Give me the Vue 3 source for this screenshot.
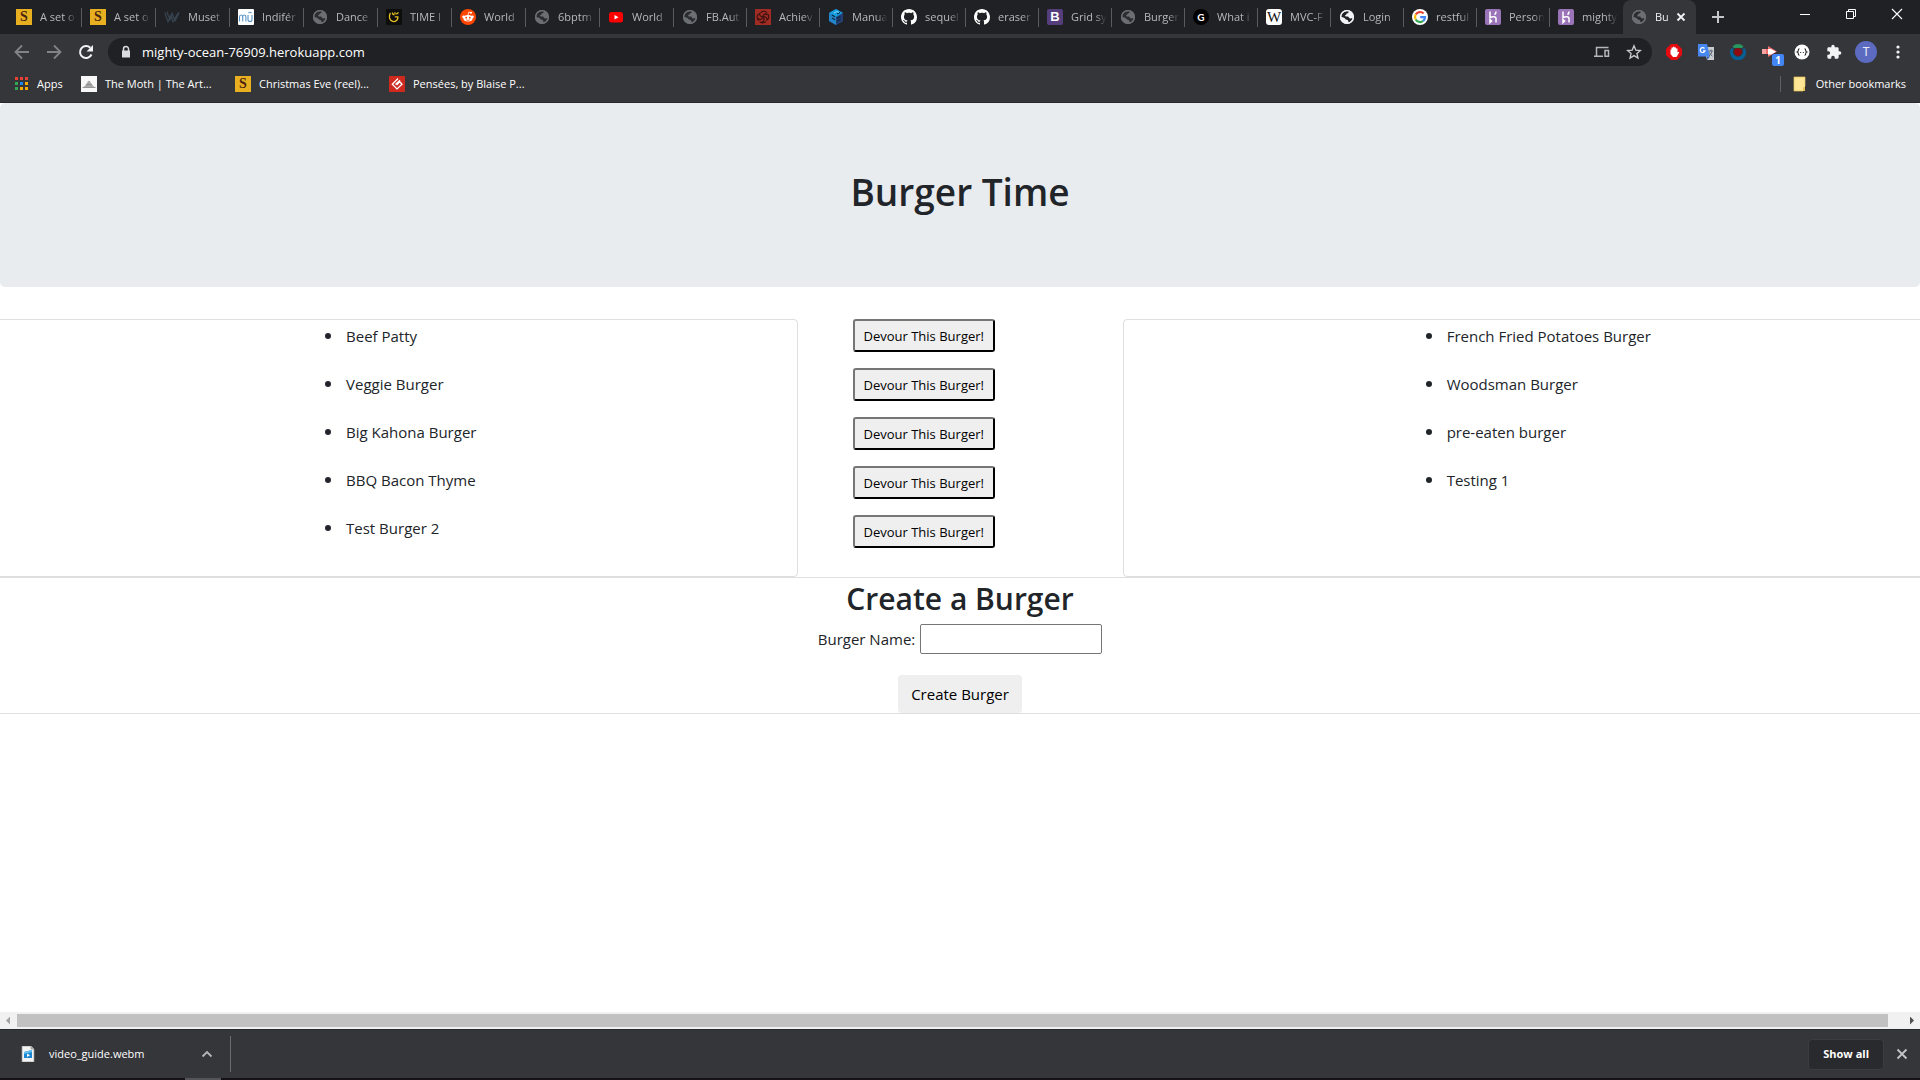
<script setup>
import { ref } from 'vue'

const letters = { session: 'S', bootstrap: 'B', gdark: 'G', wiki: 'W' }

const tabs = [
  { icon: 'session', title: 'A set o' },
  { icon: 'session', title: 'A set o' },
  { icon: 'muse', title: 'Muset' },
  { icon: 'mu', title: 'Indifér' },
  { icon: 'globe', title: 'Dance' },
  { icon: 'genius', title: 'TIME I' },
  { icon: 'reddit', title: 'World' },
  { icon: 'globe', title: '6bptm' },
  { icon: 'youtube', title: 'World' },
  { icon: 'globe', title: 'FB.Aut' },
  { icon: 'knot', title: 'Achiev' },
  { icon: 'sequelize', title: 'Manua' },
  { icon: 'github', title: 'sequel' },
  { icon: 'github', title: 'eraser' },
  { icon: 'bootstrap', title: 'Grid sy' },
  { icon: 'globe', title: 'Burger' },
  { icon: 'gdark', title: 'What i' },
  { icon: 'wiki', title: 'MVC-F' },
  { icon: 'globe-light', title: 'Login' },
  { icon: 'google', title: 'restful' },
  { icon: 'heroku', title: 'Person' },
  { icon: 'heroku', title: 'mighty' },
  { icon: 'globe', title: 'Bu', active: true },
]

const bookmarks = [
  { icon: 'moth', title: 'The Moth | The Art...' },
  { icon: 'session', title: 'Christmas Eve (reel)...' },
  { icon: 'goodreads', title: 'Pensées, by Blaise P...' },
]

const extensions = [
  { icon: 'hand', label: 'Ad blocker' },
  { icon: 'translate', label: 'Translate' },
  { icon: 'orb', label: 'Privacy' },
  { icon: 'arrow', label: 'Redirects', badge: '1' },
  { icon: 'braces', label: 'JSON viewer' },
  { icon: 'puzzle', label: 'Extensions' },
]

const fresh = ['Beef Patty', 'Veggie Burger', 'Big Kahona Burger', 'BBQ Bacon Thyme', 'Test Burger 2']
const devoured = ['French Fried Potatoes Burger', 'Woodsman Burger', 'pre-eaten burger', 'Testing 1']
const burgerName = ref('')
</script>

<template>
  <div class="window">
    <svg class="sprite" aria-hidden="true">
      <symbol id="i-muse" viewBox="0 0 16 16">
        <path d="M1 4l3 9 3-7 2 7 5-9M3 3l3 8 2-7 3 8 4-8" fill="none" stroke="#36424e" stroke-width="1.3" stroke-linejoin="round" stroke-linecap="round" />
      </symbol>
      <symbol id="i-mu" viewBox="0 0 16 16">
        <rect width="16" height="16" rx="1" fill="#fff" />
        <path d="M1.500 12.500V8q0-2 1.600-2t1.600 2V12.500M4.700 8q0-2 1.600-2t1.600 2V12.500M10 6V10.500q0 2 2 2t2-2V6M10.500 4q1.500-1.500 3 0" fill="none" stroke="#5a95c8" stroke-width="1.100" />
      </symbol>
      <symbol id="i-globe" viewBox="0 0 16 16">
        <circle cx="8" cy="8" r="7" fill="#6b6f74" />
        <path d="M7 2.200L9.800 2c.3 1.500-.8 2.300-2 2.500-.6 1-.9 1.700-2 1.900.1 1.100 1.500.9 3.200 1.100.9.700 1 1.700 2 1.900 1.100.1 1.600-.4 2.700-.5-.5 2.300-2 4-4.200 4.500-.2-1-.1-1.900-.9-2.400-1.200-.2-2.100-.4-2.500-1.500C5.400 8.700 3.700 8.300 2.300 8 2.100 5 4 2.900 7 2.200z" fill="#2b2c30" />
        <circle cx="8" cy="8" r="6.400" fill="none" stroke="#6b6f74" stroke-width="1.300" />
      </symbol>
      <symbol id="i-globe-light" viewBox="0 0 16 16">
        <circle cx="8" cy="8" r="7" fill="#f1f3f4" />
        <path d="M7 2.200L9.800 2c.3 1.500-.8 2.300-2 2.500-.6 1-.9 1.700-2 1.900.1 1.100 1.500.9 3.200 1.100.9.700 1 1.700 2 1.900 1.100.1 1.600-.4 2.700-.5-.5 2.300-2 4-4.200 4.500-.2-1-.1-1.900-.9-2.400-1.200-.2-2.100-.4-2.500-1.500C5.400 8.700 3.700 8.300 2.300 8 2.100 5 4 2.900 7 2.200z" fill="#202124" />
        <circle cx="8" cy="8" r="6.400" fill="none" stroke="#f1f3f4" stroke-width="1.300" />
      </symbol>
      <symbol id="i-genius" viewBox="0 0 16 16">
        <rect width="16" height="16" rx="1" fill="#0d0d0c" />
        <path d="M4.500 4C3 6 3 9.500 4.800 11.300c1.800 1.800 4.700 1.600 6.200-.3.900-1.200 1-2.300.9-3.200H8.800M6.500 3.500c0 1.500.7 2.300 1.800 2.300M9 3.300v2.200M10.300 5.300L12.500 3.500" fill="none" stroke="#e8c020" stroke-width="1.300" />
      </symbol>
      <symbol id="i-reddit" viewBox="0 0 16 16">
        <circle cx="8" cy="8" r="8" fill="#ff4500" />
        <ellipse cx="8" cy="9.300" rx="4.600" ry="3.300" fill="#fff" />
        <circle cx="3.500" cy="7.800" r="1.300" fill="#fff" /><circle cx="12.500" cy="7.800" r="1.300" fill="#fff" />
        <circle cx="11" cy="3.800" r="1" fill="#fff" />
        <path d="M8 6.200l.7-3 2.200.5" fill="none" stroke="#fff" stroke-width=".8" />
        <circle cx="6.200" cy="8.700" r=".9" fill="#ff4500" /><circle cx="9.800" cy="8.700" r=".9" fill="#ff4500" />
        <path d="M6 10.800q2 1.300 4 0" fill="none" stroke="#ff4500" stroke-width=".7" />
      </symbol>
      <symbol id="i-youtube" viewBox="0 0 16 16">
        <rect x="1" y="3" width="14" height="10.500" rx="2.500" fill="#f00" />
        <path d="M6.500 6v4.500l4-2.250z" fill="#fff" />
      </symbol>
      <symbol id="i-knot" viewBox="0 0 16 16">
        <rect width="16" height="16" fill="#a02c24" />
        <path d="M8 8c0-3 3-4 4-2M8 8c3-1 5 1.500 3.500 3.500M8 8c2 2 1 5-1.500 5M8 8c-1 3-4 3.500-5 1M8 8C5 8 3.500 5 5.500 3.500M6 3.500c2-2 5-1.500 6 .5M12.500 5c2 2 1.500 5-.5 6M11 12.500c-2 1.800-5 1.800-6.500 0M3.500 11.500C1.500 9.500 2 6.500 3.500 5" fill="none" stroke="#3b1110" stroke-width="1.100" />
      </symbol>
      <symbol id="i-sequelize" viewBox="0 0 16 16">
        <path d="M8 0l7 4v8l-7 4-7-4V4z" fill="#1c5fa8" />
        <path d="M8 0l7 4-7 4-7-4z" fill="#16a0e0" /><path d="M1 4l7 4v8l-7-4z" fill="#2384c8" /><path d="M8 8l7-4v8l-7 4z" fill="#243f74" />
        <path d="M4 6l3 1.700M4 9l3 1.700M9 5l3-1.500M9 9.500l3.500-2M9 12.500l3.500-2" stroke="#0b2945" stroke-width="1.200" />
        <path d="M6 4l3-1.500 2 1.200" fill="none" stroke="#7bd4f5" />
      </symbol>
      <symbol id="i-github" viewBox="0 0 16 16">
        <path fill="#fff" d="M8 0C3.580 0 0 3.580 0 8c0 3.540 2.290 6.530 5.470 7.590.4.070.55-.17.55-.38 0-.19-.01-.82-.01-1.490-2.010.37-2.530-.49-2.690-.94-.09-.23-.48-.94-.82-1.130-.28-.15-.68-.52-.01-.53.63-.01 1.080.58 1.230.82.72 1.210 1.870.87 2.330.66.07-.52.28-.87.51-1.070-1.780-.2-3.640-.89-3.640-3.950 0-.87.31-1.590.82-2.150-.08-.2-.36-1.020.08-2.120 0 0 .67-.21 2.200.82.64-.18 1.320-.27 2-.27s1.360.09 2 .27c1.530-1.040 2.200-.82 2.200-.82.44 1.100.16 1.920.08 2.120.51.56.82 1.270.82 2.150 0 3.070-1.870 3.750-3.650 3.950.29.25.54.73.54 1.480 0 1.070-.01 1.930-.01 2.200 0 .21.15.46.55.38A8.010 8.010 0 0 0 16 8c0-4.420-3.580-8-8-8z" />
      </symbol>
      <symbol id="i-google" viewBox="0 0 16 16">
        <circle cx="8" cy="8" r="8" fill="#fff" />
        <g fill="none" stroke-width="2.200">
          <path d="M11.600 4.500A5 5 0 0 0 3.700 5.500" stroke="#ea4335" /><path d="M3.700 5.500a5 5 0 0 0 0 5" stroke="#fbbc05" />
          <path d="M3.700 10.500a5 5 0 0 0 7.500 1.400" stroke="#34a853" /><path d="M11.200 11.900A5 5 0 0 0 13 8.200H8.200" stroke="#4285f4" />
        </g>
      </symbol>
      <symbol id="i-heroku" viewBox="0 0 16 16">
        <rect width="16" height="16" rx="2" fill="#9a73b8" />
        <path d="M5 2.500v6c2-1 6-1.500 6 .8v4.200M5 10.500v3l1.600-1.500zM11 2.500q0 2-1.500 3.200" fill="none" stroke="#fff" stroke-width="1.500" />
      </symbol>
      <symbol id="i-moth" viewBox="0 0 16 16">
        <rect width="16" height="16" fill="#f8f8f8" /><path d="M1.500 11.500q3-1.500 4.500-4.500Q8 2.500 10 7q1.500 3 4.500 4.500z" fill="#a8a8a8" /><path d="M1.500 11.500h13M5 8.500h6" stroke="#888" stroke-width=".8" />
      </symbol>
      <symbol id="i-goodreads" viewBox="0 0 16 16">
        <rect width="16" height="16" rx="1" fill="#cf2a20" />
        <path d="M9 2.500L3.300 8.200l4.700 4.700 5-4.700-2.200-2.400L7.600 9M6.500 8.500l4.500-4.200" fill="none" stroke="#fff" stroke-width="1.300" />
      </symbol>
      <symbol id="i-apps" viewBox="0 0 14 14">
        <path d="M0 0h3v3H0zM5 0h3v3H5zM10 0h3v3h-3z" fill="#ea4335" />
        <path d="M0 5h3v3H0zM0 10h3v3H0z" fill="#34a853" /><path d="M5 5h3v3H5z" fill="#1a86f0" />
        <path d="M10 5h3v3h-3zM5 10h3v3H5zM10 10h3v3h-3z" fill="#fbab05" />
      </symbol>
      <symbol id="i-folder" viewBox="0 0 16 16">
        <path d="M2 1h11v14H2z" fill="#ffe694" /><path d="M2 1h11v9M2 1v14h9" fill="none" stroke="#e5c35c" stroke-width=".7" /><path d="M11 11h2v4h-2z" fill="#e8c252" />
      </symbol>
      <symbol id="i-back" viewBox="0 0 16 16"><path d="M15 8H2M8 1.500L1.500 8 8 14.500" fill="none" stroke="#808387" stroke-width="1.800" /></symbol>
      <symbol id="i-forward" viewBox="0 0 16 16"><path d="M1 8h13M8 1.500L14.500 8 8 14.500" fill="none" stroke="#808387" stroke-width="1.800" /></symbol>
      <symbol id="i-reload" viewBox="0 0 16 16"><path d="M13.500 10.500a6 6 0 1 1-1.200-6.700" fill="none" stroke="#f1f3f4" stroke-width="2" /><path d="M15 1v6.500H8.500z" fill="#f1f3f4" /></symbol>
      <symbol id="i-lock" viewBox="0 0 16 16"><path d="M4 6.500h8v7H4z" fill="#dadce0" /><path d="M5.500 7V5a2.500 2.500 0 0 1 5 0v2" fill="none" stroke="#dadce0" stroke-width="1.500" /></symbol>
      <symbol id="i-devices" viewBox="0 0 16 16"><path d="M14.500 3.500H2.500V12M0 12.200h9" fill="none" stroke="#b4b7bb" stroke-width="1.500" /><path d="M11 6.500h3.500v5.800H11z" fill="none" stroke="#b4b7bb" stroke-width="1.500" /></symbol>
      <symbol id="i-star" viewBox="0 0 16 16"><path d="M8 1.800l1.800 4.300 4.700.4-3.600 3 1.100 4.600-4-2.500-4 2.500 1.100-4.600-3.600-3 4.700-.4z" fill="none" stroke="#c8cacd" stroke-width="1.300" /></symbol>
      <symbol id="i-hand" viewBox="0 0 16 16"><path d="M5 0h6l5 5v6l-5 5H5l-5-5V5z" fill="#e50b10" /><path d="M4.500 8V5.500h1V3.500h1.500V2.700h1.500v.8H10v1h1.500v4l1-.8.700.8-2.700 4.500H7L4.500 10z" fill="#fff" /></symbol>
      <symbol id="i-translate" viewBox="0 0 16 16">
        <path d="M6 3h10v13H9z" fill="#c9ccd1" /><path d="M0 0h9l3 12.500H0z" fill="#4687f1" /><path d="M9 16v-3.500h3z" fill="#2f62bf" />
        <path d="M6.500 4.500A2.400 2.400 0 1 0 7 6.800H5" fill="none" stroke="#fff" stroke-width="1.200" />
        <path d="M10.500 7H15M13 5.500V7M14 7q-.5 3-3 5M11.500 8.500q1 2.500 3 3.700" fill="none" stroke="#5c6673" />
      </symbol>
      <symbol id="i-orb" viewBox="0 0 16 16"><path d="M2.500 2.500a7.500 7.500 0 0 1 11 0L12 4H4z" fill="#27965f" /><path d="M1 4.500a8 8 0 1 0 14 0h-3a5 5 0 1 1-8 0z" fill="#066096" /><circle cx="8" cy="8" r="3.700" fill="#920a0d" /></symbol>
      <symbol id="i-arrow" viewBox="0 0 16 16"><path d="M0 5h6V2l9 5.500L6 13v-3H0z" fill="#f26d6d" /><path d="M6 5h3l5 2.700-5 2.800H6z" fill="#fff" /><path d="M0 5h4v5H0z" fill="#f5a3a3" /></symbol>
      <symbol id="i-braces" viewBox="0 0 16 16"><circle cx="8" cy="8" r="7.500" fill="#fff" /><path d="M5.500 4.700q-1.200 0-1.200 1.500T3.300 8q1 .3 1 1.800t1.200 1.500M10.500 4.700q1.200 0 1.200 1.500T12.700 8q-1 .3-1 1.800t-1.200 1.500M6.200 8.500h1M8.800 8.500h1" fill="none" stroke="#222" stroke-width="1.100" /></symbol>
      <symbol id="i-puzzle" viewBox="0 0 24 24"><path fill="#f1f3f4" d="M20.500 11H19V7c0-1.100-.9-2-2-2h-4V3.500a2.500 2.500 0 0 0-5 0V5H4c-1.100 0-2 .9-2 2v3.800h1.500a2.700 2.700 0 0 1 0 5.400H2V20c0 1.100.9 2 2 2h3.800v-1.500a2.700 2.700 0 0 1 5.400 0V22H17c1.100 0 2-.9 2-2v-4h1.500a2.500 2.500 0 0 0 0-5z" /></symbol>
      <symbol id="i-dots" viewBox="0 0 16 16"><circle cx="8" cy="3" r="1.600" fill="#f1f3f4" /><circle cx="8" cy="8" r="1.600" fill="#f1f3f4" /><circle cx="8" cy="13" r="1.600" fill="#f1f3f4" /></symbol>
      <symbol id="i-plus" viewBox="0 0 16 16"><path d="M8 2v12M2 8h12" stroke="#c4c7ca" stroke-width="2" /></symbol>
      <symbol id="i-x" viewBox="0 0 16 16"><path d="M4.500 4.500l7 7M11.500 4.500l-7 7" stroke="#f1f3f4" stroke-width="1.800" /></symbol>
      <symbol id="i-minimize" viewBox="0 0 16 16"><path d="M3 8.500h10" stroke="#fff" /></symbol>
      <symbol id="i-restore" viewBox="0 0 16 16"><path d="M3.500 5.500h7v7h-7zM5.500 5.500v-2h7v7h-2" fill="none" stroke="#fff" /></symbol>
      <symbol id="i-close" viewBox="0 0 16 16"><path d="M3 3l10 10M13 3L3 13" stroke="#fff" stroke-width="1.100" /></symbol>
      <symbol id="i-file" viewBox="0 0 16 16"><path d="M2 0h9l3 3v13H2z" fill="#f3f3f3" stroke="#999" stroke-width=".7" /><path d="M11 0v3h3" fill="#bbb" stroke="#888" stroke-width=".6" /><path d="M4 6l8-2v8H4z" fill="#1b86d2" /><path d="M4 6l8-2v2L4 8z" fill="#63c0ee" /><path d="M7 7.500v3.500l3-1.700z" fill="#fff" /></symbol>
      <symbol id="i-chevron" viewBox="0 0 16 16"><path d="M3.500 10.500L8 6l4.500 4.500" fill="none" stroke="#b4b6b9" stroke-width="1.800" /></symbol>
      <symbol id="i-dismiss" viewBox="0 0 16 16"><path d="M3.500 3.500l9 9M12.500 3.500l-9 9" stroke="#c3c4c6" stroke-width="1.800" /></symbol>
    </svg>

    <header class="chrome">
      <div class="tabstrip">
        <div v-for="(tab, i) in tabs" :key="i" class="tab" :class="{ active: tab.active }">
          <span v-if="letters[tab.icon]" class="icon letter" :class="tab.icon">{{ letters[tab.icon] }}</span>
          <svg v-else class="icon"><use :href="'#i-' + tab.icon" /></svg>
          <span class="tab-title">{{ tab.title }}</span>
          <button v-if="tab.active" class="bare tab-close" aria-label="Close tab"><svg class="icon"><use href="#i-x" /></svg></button>
        </div>
        <button class="bare new-tab" aria-label="New tab"><svg class="icon"><use href="#i-plus" /></svg></button>
        <div class="window-controls">
          <button class="bare" aria-label="Minimize"><svg class="icon"><use href="#i-minimize" /></svg></button>
          <button class="bare" aria-label="Restore"><svg class="icon"><use href="#i-restore" /></svg></button>
          <button class="bare" aria-label="Close"><svg class="icon"><use href="#i-close" /></svg></button>
        </div>
      </div>

      <div class="toolbar">
        <button class="bare cell" aria-label="Back"><svg class="icon"><use href="#i-back" /></svg></button>
        <button class="bare cell" aria-label="Forward"><svg class="icon"><use href="#i-forward" /></svg></button>
        <button class="bare cell" aria-label="Reload"><svg class="icon"><use href="#i-reload" /></svg></button>
        <div class="omnibox">
          <svg class="icon"><use href="#i-lock" /></svg>
          <input class="url" type="text" aria-label="Address" value="mighty-ocean-76909.herokuapp.com" />
          <button class="bare cell" aria-label="Send to device"><svg class="icon"><use href="#i-devices" /></svg></button>
          <button class="bare cell" aria-label="Bookmark"><svg class="icon"><use href="#i-star" /></svg></button>
        </div>
        <button v-for="ext in extensions" :key="ext.icon" class="bare cell" :aria-label="ext.label">
          <svg class="icon"><use :href="'#i-' + ext.icon" /></svg>
          <span v-if="ext.badge" class="badge">{{ ext.badge }}</span>
        </button>
        <button class="bare cell" aria-label="Profile"><span class="avatar">T</span></button>
        <button class="bare cell" aria-label="Menu"><svg class="icon"><use href="#i-dots" /></svg></button>
      </div>

      <nav class="bookmarks">
        <a class="bookmark apps" href="#"><svg class="apps-icon"><use href="#i-apps" /></svg>Apps</a>
        <a v-for="b in bookmarks" :key="b.title" class="bookmark saved" href="#">
          <span v-if="letters[b.icon]" class="icon letter" :class="b.icon">{{ letters[b.icon] }}</span>
          <svg v-else class="icon"><use :href="'#i-' + b.icon" /></svg>
          {{ b.title }}
        </a>
        <a class="bookmark other" href="#"><svg class="icon"><use href="#i-folder" /></svg>Other bookmarks</a>
      </nav>
    </header>

    <main class="page">
      <section class="jumbotron"><h1>Burger Time</h1></section>

      <div class="row">
        <section class="card">
          <ul class="burgers"><li v-for="name in fresh" :key="name">{{ name }}</li></ul>
        </section>
        <div class="actions">
          <button v-for="name in fresh" :key="name" class="devour">Devour This Burger!</button>
        </div>
        <section class="card">
          <ul class="burgers"><li v-for="name in devoured" :key="name">{{ name }}</li></ul>
        </section>
      </div>

      <form class="create" @submit.prevent>
        <h2>Create a Burger</h2>
        <div class="field">
          <label for="burger-name">Burger Name:</label>
          <input id="burger-name" v-model="burgerName" type="text" />
        </div>
        <button class="submit" type="submit">Create Burger</button>
      </form>
    </main>

    <div class="scrollbar">
      <span class="arrow left"></span>
      <span class="thumb"></span>
      <span class="arrow right"></span>
    </div>

    <footer class="downloads">
      <div class="download">
        <svg class="icon"><use href="#i-file" /></svg>
        <span class="filename">video_guide.webm</span>
        <button class="bare cell" aria-label="Download options"><svg class="icon"><use href="#i-chevron" /></svg></button>
      </div>
      <button class="show-all">Show all</button>
      <button class="bare cell" aria-label="Close downloads bar"><svg class="icon"><use href="#i-dismiss" /></svg></button>
    </footer>
    <div class="taskbar"><span class="task"></span></div>
  </div>
</template>

<style>
body {
  margin: 0;
}
</style>

<style scoped>
.window {
  display: flex;
  flex-direction: column;
  min-height: 100vh;
  background: #fff;
  color: #212529;
  font-family: "Open Sans", "Noto Sans", sans-serif;
  font-size: 15px;
  line-height: 24px;
  overflow: hidden;
}
.window *,
.window {
  box-sizing: border-box;
}
.sprite {
  position: absolute;
  width: 0;
  height: 0;
}
.icon {
  display: block;
  flex: none;
  width: 16px;
  height: 16px;
}
.letter {
  text-align: center;
  line-height: 16px;
}
.session {
  background: #e8b020;
  color: #4a2410;
  font-family: "Liberation Serif", serif;
  font-size: 14px;
  font-weight: bold;
}
.bootstrap {
  border-radius: 2px;
  background: #563d7c;
  color: #fff;
  font-family: "Liberation Sans", sans-serif;
  font-size: 13px;
  font-weight: bold;
}
.gdark {
  border-radius: 50%;
  background: #000;
  color: #fff;
  font-family: Lato, sans-serif;
  font-size: 10px;
  font-weight: bold;
}
.wiki {
  border-radius: 3px;
  background: #fff;
  color: #111;
  font-family: "Liberation Serif", serif;
  font-size: 15px;
}
.bare {
  display: flex;
  align-items: center;
  justify-content: center;
  flex: none;
  padding: 0;
  border: 0;
  background: none;
}
.cell {
  position: relative;
  width: 32px;
  height: 28px;
}

/* Browser frame */
.chrome {
  background: #35363a;
  border-bottom: 1px solid #28292c;
  color: #fff;
  font-size: 11px;
}
.tabstrip {
  display: flex;
  height: 34px;
  padding-left: 8px;
  background: #202124;
}
.tab {
  display: flex;
  align-items: center;
  flex: 0 1 73px;
  min-width: 0;
  gap: 8px;
  padding: 0 4px 0 8px;
  color: #b5b9be;
  background: linear-gradient(#5a5b5f, #5a5b5f) right 8px / 1px 19px no-repeat;
}
.tab:nth-child(-n + 9) {
  flex-basis: 74px;
}
.tab:nth-child(22) {
  background: none;
}
.tab-title {
  flex: 1 1 0;
  min-width: 0;
  overflow: hidden;
  white-space: nowrap;
  mask-image: linear-gradient(to right, #000 65%, transparent 96%);
}
.tab.active {
  gap: 0;
  background: #35363a;
  border-radius: 8px 8px 0 0;
  color: #f1f3f4;
}
.active .tab-title {
  flex: 0 0 18px;
  margin-left: 8px;
}
.tab-close {
  width: 16px;
}
.new-tab {
  width: 44px;
}
.window-controls {
  display: flex;
  margin-left: auto;
  height: 28px;
}
.window-controls .bare {
  width: 46px;
}
.toolbar {
  display: flex;
  align-items: center;
  height: 34px;
  padding: 2px 6px 0;
}
.omnibox {
  display: flex;
  align-items: center;
  flex: 1;
  height: 28px;
  margin: 0 6px;
  padding: 0 2px 0 10px;
  border-radius: 14px;
  background: #202124;
}
.url {
  flex: 1;
  min-width: 0;
  margin-left: 8px;
  padding: 0;
  border: 0;
  background: none;
  color: #fff;
  font: 13px/20px "Open Sans", "Noto Sans", sans-serif;
}
.badge {
  position: absolute;
  right: 2px;
  bottom: 0;
  width: 12px;
  height: 12px;
  border-radius: 2px;
  background: #4285f4;
  color: #fff;
  font: bold 10px/12px "Open Sans", sans-serif;
  text-align: center;
}
.avatar {
  width: 22px;
  height: 22px;
  border-radius: 50%;
  background: #5c6bc0;
  color: #e8eaf6;
  font: 12px/22px Roboto, sans-serif;
}
.bookmarks {
  display: flex;
  align-items: center;
  height: 34px;
  padding: 0 14px 2px 15px;
}
.bookmark {
  display: flex;
  align-items: center;
  gap: 8px;
  color: #fff;
  text-decoration: none;
  white-space: nowrap;
}
.apps {
  width: 66px;
}
.apps-icon {
  width: 14px;
  height: 14px;
}
.saved {
  width: 154px;
}
.other {
  margin-left: auto;
  padding-left: 12px;
  background: linear-gradient(#5f6064, #5f6064) left center / 1px 16px no-repeat;
}

/* Page */
.page {
  flex: 1;
}
h1,
h2 {
  margin: 0;
  font-weight: 600;
}
.jumbotron {
  padding: 65px 32px 71px;
  margin-bottom: 32px;
  border-radius: 5px;
  background: #e9ecef;
  text-align: center;
}
h1 {
  font-size: 37px;
  line-height: 48px;
}
.row {
  display: grid;
  grid-template-columns: 5fr 2fr 5fr;
  margin: 0 -15px;
}
.card {
  border: 1px solid #dfdfdf;
  border-radius: 4px;
}
.burgers {
  width: fit-content;
  margin: 0 auto;
  padding: 4px 0 0 19px;
  list-style: none;
}
.burgers li {
  display: flex;
  align-items: center;
  gap: 15px;
  padding-bottom: 24px;
}
.burgers li::before {
  content: "";
  width: 6px;
  height: 6px;
  border-radius: 50%;
  background: #212529;
}
.actions {
  display: flex;
  flex-direction: column;
  align-items: flex-start;
  gap: 16px;
  padding: 0 15px 29px 55px;
}
.devour {
  height: 33px;
  padding: 1px 9px 0;
  border: 2px outset #767676;
  border-color: #767676 #212121 #212121 #767676;
  border-radius: 3px;
  background: #efefef;
  color: #000;
  font: 13px/21px "Open Sans", "Noto Sans", sans-serif;
}
.create {
  display: flex;
  flex-direction: column;
  align-items: center;
  border: 1px solid #dfdfdf;
  border-width: 1px 0;
}
h2 {
  margin: 2px 0 6px;
  font-size: 30px;
  line-height: 38px;
}
.field {
  display: flex;
  align-items: center;
  gap: 5px;
  margin-bottom: 21px;
}
.field input {
  width: 182px;
  height: 30px;
  padding: 1px 2px;
  border: 1px solid #767676;
  border-radius: 2px;
  background: #fff;
  font: inherit;
}
.submit {
  height: 38px;
  padding: 0 13px;
  border: 0;
  border-radius: 4px;
  background: #efefef;
  color: #000;
  font: inherit;
}

/* Scroll bar and downloads */
.scrollbar {
  display: flex;
  align-items: center;
  height: 17px;
  background: #f1f1f1;
}
.thumb {
  flex: 1;
  height: 13px;
  margin-right: 15px;
  background: #c1c1c1;
}
.arrow {
  width: 17px;
  height: 8px;
  background: #a3a3a3;
  clip-path: polygon(6px 4px, 10px 0, 10px 8px);
}
.arrow.right {
  background: #505050;
  clip-path: polygon(11px 4px, 7px 0, 7px 8px);
}
.downloads {
  display: flex;
  align-items: center;
  height: 49px;
  padding-right: 2px;
  border-top: 1px solid #28292c;
  background: #35363a;
  color: #fff;
  font-size: 11px;
}
.download {
  display: flex;
  align-items: center;
  width: 231px;
  height: 36px;
  padding: 0 7px 0 20px;
  border-right: 1px solid #6b6c70;
}
.filename {
  flex: 1;
  margin-left: 13px;
}
.show-all {
  height: 31px;
  margin-left: auto;
  margin-right: 2px;
  padding: 0 14px;
  border: 1px solid #3c3d41;
  border-radius: 4px;
  background: #292a2d;
  color: #fff;
  font: 700 11px/20px "Open Sans", "Noto Sans", sans-serif;
}
.taskbar {
  height: 2px;
  padding-left: 185px;
  background: #161115;
}
.task {
  display: block;
  width: 36px;
  height: 2px;
  background: #555458;
}
</style>
